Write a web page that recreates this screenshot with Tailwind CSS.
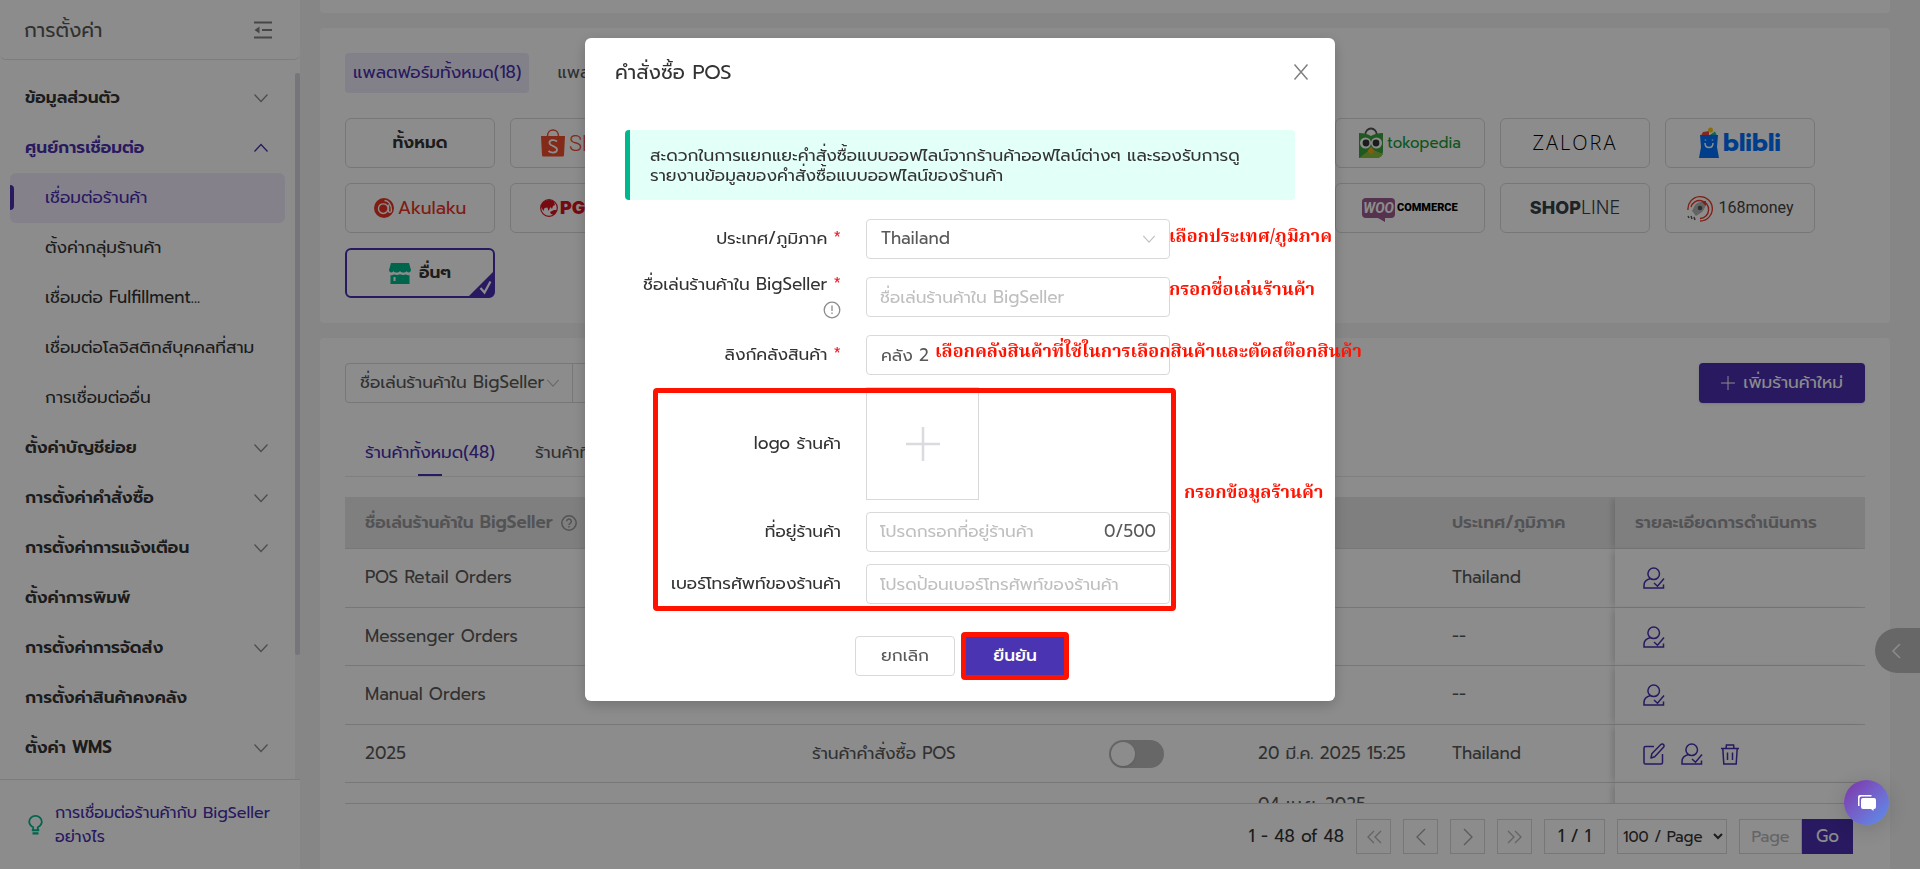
<!DOCTYPE html>
<html lang="th">
<head>
  <meta charset="UTF-8">
  <meta name="viewport" content="width=device-width, initial-scale=1">
  <title>BigSeller - การตั้งค่า</title>
  <script src="https://cdn.jsdelivr.net/npm/@tailwindcss/browser@4"></script>
</head>
<body class="h-screen overflow-hidden bg-[#f5f5f5] font-['Prompt','Noto_Sans',sans-serif] text-[17px] text-[#595959]">

  <!-- Icon sprite -->
  <svg class="hidden">
    <symbol id="down" viewBox="0 0 16 16"><path d="M1.5 4.5 8 11.5l6.500-7" fill="none" stroke="currentColor" stroke-width="1.300"/></symbol>
    <symbol id="up" viewBox="0 0 16 16"><path d="M1.500 11.500 8 4.500l6.500 7" fill="none" stroke="currentColor" stroke-width="1.300"/></symbol>
    <symbol id="user-check" viewBox="0 0 22 22"><path d="M10.700 1a5.800 5.800 0 1 1 0 11.600 5.800 5.800 0 0 1 0-11.600M7.500 11.500C3.500 12.500 1 15 1 18.500V21h19.500v-3.500M11 16l3.500 3.200L21 11.500" fill="none" stroke="currentColor" stroke-width="1.500"/></symbol>
    <symbol id="edit" viewBox="0 0 22 22"><path d="M11 3.500H2.500A1.500 1.500 0 0 0 1 5v14.500A1.500 1.500 0 0 0 2.500 21h15.500a1.500 1.500 0 0 0 1.500-1.500V11M8 15l.800-4.200 9-9.200a1.800 1.800 0 0 1 2.700 0 1.800 1.800 0 0 1 0 2.600L11.700 13.700z" fill="none" stroke="currentColor" stroke-width="1.500" stroke-linejoin="round"/></symbol>
    <symbol id="trash" viewBox="0 0 22 22"><path d="M2 5.500h18M7 5.500l.400-3.500h7.200l.400 3.500M3.800 5.500 4.800 21h12.400l1-15.500M8.500 9.500V17M13.500 9.500V17" fill="none" stroke="currentColor" stroke-width="1.500"/></symbol>
  </svg>

  <div class="flex h-full">

    <!-- Sidebar -->
    <aside class="flex w-[300px] shrink-0 flex-col bg-white">
      <div class="flex h-[60px] items-center justify-between rounded-b-md border-b border-[#e4e4e4] pr-7 pl-6">
        <h1 class="text-xl">การตั้งค่า</h1>
        <button aria-label="ย่อเมนู" class="text-[#808080]">
          <svg class="h-[18px] w-[18px]" viewBox="0 0 18 18" fill="none" stroke="currentColor" stroke-width="1.800"><path d="M0 1.500h18M8 9h10M0 16.500h18"/><path d="M5.500 5.500v7L.500 9z" fill="currentColor" stroke="none"/></svg>
        </button>
      </div>

      <div class="flex min-h-0 flex-1 overflow-hidden pt-[13px]">
        <nav class="flex-1 pl-[10px] text-[#333]">
          <ul id="menu" class="mr-[10px]"></ul>
        </nav>
        <div class="w-[5px] bg-[#f5f5f5]"><div class="h-[582px] w-[5px] rounded bg-[#d5d8de]"></div></div>
      </div>

      <div class="flex h-[90px] items-center gap-3 border-t border-[#e0e0e0] pr-4 pl-7">
        <svg class="h-5 w-[15px] shrink-0 text-[#00b88d]" viewBox="0 0 15 20" fill="none" stroke="currentColor" stroke-width="1.800"><path d="M5.200 15v-2.800C2.800 11 1.200 9.300 1.200 6.800a6.300 5.900 0 0 1 12.600 0c0 2.500-1.600 4.200-4 5.400V15"/><path d="M3.800 14.300h7.400v2H3.800zM4.500 17.300h6v2.200h-6z" fill="currentColor" stroke="none"/></svg>
        <a href="#" class="leading-6 text-base text-[#492fb0]">การเชื่อมต่อร้านค้ากับ BigSeller อย่างไร</a>
      </div>
    </aside>

    <!-- Content -->
    <main class="flex min-w-0 flex-1 flex-col pr-[30px] pl-5">
      <section class="h-[13px] shrink-0 rounded-b bg-white"></section>

      <section class="mt-[15px] h-[295px] shrink-0 rounded bg-white p-[25px]">
        <div class="flex h-10 items-center gap-5">
          <button class="h-10 rounded bg-[#edeaf8] px-2 text-[#492fb0]">แพลตฟอร์มทั้งหมด(18)</button>
          <button class="h-10 px-2 whitespace-nowrap">แพลตฟอร์ม</button>
        </div>

        <div class="mt-[25px] grid auto-rows-[50px] grid-cols-[repeat(9,150px)] gap-[15px] text-[#333]">
          <button class="rounded-md border border-[#d9d9d9] font-semibold">ทั้งหมด</button>
          <button class="flex items-center gap-1 rounded-md border border-[#d9d9d9] pl-[30px] text-[22px] text-[#ee4d2d]">
            <svg class="h-7 w-6" viewBox="0 0 24 28"><path d="M0 7h24l-1 19a1.500 1.500 0 0 1-1.500 1.500h-19A1.500 1.500 0 0 1 1 26z" fill="#ee4d2d"/><path d="M6.500 7c0-8 11-8 11 0" fill="none" stroke="#ee4d2d" stroke-width="1.500"/><path d="M16 12.500c-3-2.500-8-1.500-7.500 1.700C9 17.500 16 17 16 20.500c0 3.500-5.500 4-8.500 1.500" fill="none" stroke="#fff" stroke-width="1.800"/></svg>
            <span class="font-['Roboto',sans-serif] font-light">Shopee</span>
          </button>
          <button class="col-start-7 flex items-center justify-center gap-1 rounded-md border border-[#d9d9d9] text-[#189a32]">
            <svg class="h-8 w-6" viewBox="0 0 24 32"><path d="M6 9c0-10 12-10 12 0" fill="none" stroke="#555" stroke-width="1.800"/><path d="M0 6c5 0 9 1 12 3 3-2 7-3 12-3v18q0 7-7 7H0z" fill="#3ba13c"/><path d="m0 31 12-9 12 5q-2 4-7 4z" fill="#8bbf3c"/><circle cx="6.500" cy="16" r="5.500" fill="#fff"/><circle cx="17.500" cy="16" r="5.500" fill="#fff"/><circle cx="7" cy="16" r="3.400" fill="#333"/><circle cx="17" cy="16" r="3.400" fill="#333"/><path d="M12 19.500 15.500 24 12 27.500 8.500 24z" fill="#f6a51c"/></svg>
            <span class="text-[15px]">tokopedia</span>
          </button>
          <button class="rounded-md border border-[#d9d9d9] font-['Open_Sans',sans-serif] text-xl font-light tracking-widest text-black">ZALORA</button>
          <button class="flex items-center justify-center gap-1 rounded-md border border-[#d9d9d9] text-[#0072ff]">
            <svg class="h-8 w-5" viewBox="0 0 20 32"><path d="M2 8.500 4 5l6-1v4.500z" fill="#f0483e"/><circle cx="11.500" cy="3" r="2.500" fill="#f9c80e"/><path d="m10 8.500 6-4 2 4z" fill="#1fb5a0"/><path d="M1 8h18l-1 12 2 11H0l2-11z" fill="#0072ff"/><path d="M6 16c0 6 8 6 8 0M6.500 12.500v1M13.500 12.500v1" fill="none" stroke="#fff" stroke-width="1.500"/></svg>
            <span class="text-2xl font-bold">blibli</span>
          </button>

          <button class="flex items-center justify-center gap-1 rounded-md border border-[#d9d9d9] text-[#ea3323]">
            <svg class="h-5 w-5" viewBox="0 0 20 20"><circle cx="10" cy="10" r="10" fill="#ea3323"/><path d="M14.500 6.500v6c0 3 3 2 3 0C17.500 6 14 2.500 10.500 2.500M14 10a4.800 4.800 0 1 1-9.500 0 4.800 4.800 0 0 1 9.500 0" fill="none" stroke="#fff" stroke-width="1.400"/></svg>
            <span class="text-lg">Akulaku</span>
          </button>
          <button class="flex items-center gap-[2px] rounded-md border border-[#d9d9d9] pl-[29px] text-[#d8121f]">
            <svg class="h-[18px] w-[18px]" viewBox="0 0 18 18"><circle cx="9" cy="9" r="8.300" fill="#fff" stroke="#d8121f" stroke-width="1.200"/><path d="M1 8c0-4 4-7 8-7 2 0 4 .500 5 2l1 3-2 1-1 3-1.500-2-2 4-1-3.500-3 .500-1 3zM10 13l4-2 3 0-3 5-3-1z" fill="#d8121f"/></svg>
            <span class="font-['Inter',sans-serif] text-lg font-black">PGMALL</span>
          </button>
          <button class="col-start-7 flex items-center justify-center gap-[2px] rounded-md border border-[#d9d9d9] font-['Roboto',sans-serif] text-black">
            <span class="relative rounded bg-[#9b5c8f] px-px text-sm leading-5 font-bold text-white italic">WOO<svg class="absolute top-5 left-4 h-1 w-2" viewBox="0 0 8 4"><path d="M0 0h7v4z" fill="#9b5c8f"/></svg></span>
            <span class="text-[11px] font-black">COMMERCE</span>
          </button>
          <button class="rounded-md border border-[#d9d9d9] font-['Inter',sans-serif] text-lg text-[#36424a]"><b class="font-extrabold">SHOP</b><span class="font-light">LINE</span></button>
          <button class="flex items-center justify-center gap-[6px] rounded-md border border-[#d9d9d9] text-[#444]">
            <svg class="h-[27px] w-[26px]" viewBox="0 0 26 27" fill="none" stroke="#ea3b2a" stroke-width="1.400"><path d="M1 15A12.200 12.200 0 1 1 13 26"/><path d="M4 12a9 9 0 1 1 9 11.500"/><path d="M5 16 8 10c3-3 7-4 11-4 0 4-1 8-4 11l-6 4z" fill="#b4b4b4" stroke="none"/><path d="M14 6h5v5z" fill="#ea3b2a" stroke="none"/><circle cx="13" cy="13" r="2.300" fill="#555" stroke="none"/><path d="m1 21 1 2m2-2 1 3m2-2 1 3" stroke="#555"/></svg>
            <span class="font-['Roboto',sans-serif] text-base">168money</span>
          </button>

          <button class="relative flex items-center justify-center gap-2 rounded-md border-2 border-[#492fb0] font-semibold">
            <svg class="h-[21px] w-[22px]" viewBox="0 0 22 21"><path d="M2 0h18l2 7c0 3-4 3-4.500 1-1 2-5 2-6.500 0-1.500 2-5.500 2-6.500 0C4 10 0 10 0 7zM1.500 12c2 .500 3 0 3.500-.700 1.500 1 4 1 6 0 2 1 4.500 1 6 0 .500.700 1.500 1.200 3.500.700V21h-19z" fill="#00b88d"/><path d="M5.500 14v4" stroke="#fff" stroke-width="2"/></svg>
            อื่นๆ
            <svg class="absolute right-0 bottom-0 h-6 w-6" viewBox="0 0 24 24"><path d="M24 0v24H0z" fill="#492fb0"/><path d="m11.500 16 4 4.500 6-11" fill="none" stroke="#fff" stroke-width="2.200"/></svg>
          </button>
        </div>
      </section>

      <section class="mt-[15px] flex min-h-0 flex-1 flex-col rounded-t bg-white px-[25px] pt-[25px]">
        <div class="flex h-10 justify-between">
          <div class="flex w-[400px] rounded-sm border border-[#d9d9d9]">
            <button class="flex items-center gap-[2px] border-r border-[#d9d9d9] pr-3 pl-[14px] whitespace-nowrap">ชื่อเล่นร้านค้าใน BigSeller <svg class="h-[14px] w-[14px] text-[#bfbfbf]"><use href="#down"/></svg></button>
            <input aria-label="ค้นหา" class="min-w-0 flex-1">
          </div>
          <button class="flex items-center gap-2 rounded-sm bg-[#492fb0] px-[22px] text-white shadow">
            <svg class="h-[14px] w-[14px]" viewBox="0 0 14 14" stroke="currentColor"><path d="M7 0v14M0 7h14"/></svg>
            <span>เพิ่มร้านค้าใหม่</span>
          </button>
        </div>

        <div class="mt-[25px] flex h-[49px] shrink-0 gap-10 border-b border-[#e8e8e8] px-5">
          <button class="flex flex-col items-center text-[#492fb0]"><span class="flex h-[46px] items-center pt-1">ร้านค้าทั้งหมด(48)</span><span class="h-[2px] w-6 bg-[#492fb0]"></span></button>
          <button class="h-[46px] pt-1 whitespace-nowrap">ร้านค้าที่เปิดใช้งาน</button>
        </div>

        <div class="mt-5 min-h-0 flex-1 overflow-hidden">
          <table class="w-full table-fixed border-separate border-spacing-0 text-left">
            <thead>
              <tr class="h-[52px] bg-[#e8e8e8] text-[#98989d]">
                <th class="border-b border-[#d9d9d9] pl-5 font-semibold"><span class="flex items-center gap-2">ชื่อเล่นร้านค้าใน BigSeller
                  <svg class="h-4 w-4" viewBox="0 0 16 16" fill="none" stroke="currentColor" stroke-width="1.500"><circle cx="8" cy="8" r="7.200"/><path d="M5.700 6.300a2.300 2.300 0 1 1 3.500 2C8.300 8.800 8 9.200 8 10M8 11v1.500"/></svg></span></th>
                <th class="w-[243px] border-b border-[#d9d9d9]"></th>
                <th class="w-[203px] border-b border-[#d9d9d9]"></th>
                <th class="w-[194px] border-b border-[#d9d9d9]"></th>
                <th class="w-[183px] border-b border-[#d9d9d9] pl-5 font-semibold">ประเทศ/ภูมิภาค</th>
                <th class="w-[250px] border-b border-[#d9d9d9] pl-5 font-semibold shadow-[-5px_0_6px_-2px_rgba(0,0,0,0.15)]">รายละเอียดการดำเนินการ</th>
              </tr>
            </thead>
            <tbody id="rows"></tbody>
          </table>
        </div>

        <!-- Pagination -->
        <div class="flex h-[66px] shrink-0 items-center justify-end gap-3 border-t border-[#d9d9d9] pr-3 text-[#333]">
          <span>1 - 48 of 48</span>
          <button aria-label="หน้าแรก" class="flex h-[35px] w-[35px] items-center justify-center border border-[#d9d9d9] text-[#b5b5b5]"><svg class="h-4 w-4" viewBox="0 0 16 16" fill="none" stroke="currentColor" stroke-width="1.300"><path d="M8 2 2 8l6 6M15 2 9 8l6 6"/></svg></button>
          <button aria-label="ก่อนหน้า" class="flex h-[35px] w-[35px] items-center justify-center border border-[#d9d9d9] text-[#a5a5a5]"><svg class="h-[18px] w-[10px]" viewBox="0 0 10 18" fill="none" stroke="currentColor" stroke-width="1.300"><path d="M9 1 1 9l8 8"/></svg></button>
          <button aria-label="ถัดไป" class="flex h-[35px] w-[35px] items-center justify-center border border-[#d9d9d9] text-[#a5a5a5]"><svg class="h-[18px] w-[10px]" viewBox="0 0 10 18" fill="none" stroke="currentColor" stroke-width="1.300"><path d="m1 1 8 8-8 8"/></svg></button>
          <button aria-label="หน้าสุดท้าย" class="flex h-[35px] w-[35px] items-center justify-center border border-[#d9d9d9] text-[#b5b5b5]"><svg class="h-4 w-4" viewBox="0 0 16 16" fill="none" stroke="currentColor" stroke-width="1.300"><path d="m1 2 6 6-6 6M8 2l6 6-6 6"/></svg></button>
          <span class="flex h-[35px] w-[61px] items-center justify-center border border-[#d9d9d9]">1 / 1</span>
          <select aria-label="จำนวนต่อหน้า" class="h-[35px] w-[110px] border border-[#d9d9d9] bg-white px-px text-[15px]"><option>100 / Page</option></select>
          <span class="flex">
            <input aria-label="หน้า" placeholder="Page" class="h-[35px] w-[63px] border border-[#d9d9d9] text-center text-base placeholder:text-[#b8b8b8]">
            <button class="h-[35px] w-[51px] bg-[#492fb0] text-white">Go</button>
          </span>
        </div>
      </section>
    </main>
  </div>

  <button aria-label="เปิดแผง" class="fixed top-[628px] right-0 flex h-[45px] w-[45px] items-center rounded-l-full bg-[#bcbcbc] pl-4 text-white"><svg class="h-4 w-[10px]" viewBox="0 0 10 16" fill="none" stroke="currentColor" stroke-width="1.500"><path d="M9 1 2 8l7 7"/></svg></button>

  <!-- Modal -->
  <div class="fixed inset-0 flex items-start justify-center bg-black/45 pt-[38px]">
    <div role="dialog" aria-labelledby="modalTitle" class="relative w-[750px] rounded-md bg-white pb-[25px] text-[#333] shadow-[0_4px_14px_rgba(0,0,0,0.2)]">
      <div class="flex h-[67px] items-center justify-between px-[30px]">
        <h2 id="modalTitle" class="text-xl">คำสั่งซื้อ POS</h2>
        <button aria-label="ปิด" class="-mr-1 text-[#808080]"><svg class="h-4 w-4" viewBox="0 0 16 16" fill="none" stroke="currentColor" stroke-width="1.500"><path d="M1.500.500l13 15M14.500.500l-13 15"/></svg></button>
      </div>

      <p class="mx-10 mt-[25px] rounded border-l-[5px] border-[#00b88d] bg-[#e2fff8] px-5 py-[15px] leading-5">สะดวกในการแยกแยะคำสั่งซื้อแบบออฟไลน์จากร้านค้าออฟไลน์ต่างๆ และรองรับการดูรายงานข้อมูลของคำสั่งซื้อแบบออฟไลน์ของร้านค้า</p>

      <form class="mt-[19px]">
        <div class="mb-[18px] flex h-10 items-center gap-[25px]">
          <label for="country" class="w-[256px] text-right">ประเทศ/ภูมิภาค <span class="text-[#f5222d]">*</span></label>
          <div class="relative h-10 w-[304px]">
            <select id="country" class="h-10 w-full appearance-none rounded-sm border border-[#d9d9d9] px-[14px] text-[#595959]"><option>Thailand</option></select>
            <svg class="pointer-events-none absolute top-[13px] right-[14px] h-[14px] w-[14px] text-[#bfbfbf]"><use href="#down"/></svg>
          </div>
        </div>
        <div class="mb-[18px] flex h-10 items-center gap-[25px]">
          <label for="nickname" class="w-[256px] text-right leading-[26px]">ชื่อเล่นร้านค้าใน BigSeller <span class="text-[#f5222d]">*</span>
            <svg class="ml-auto block h-[26px] w-[18px] text-[#8c8c8c]" viewBox="0 0 18 26" fill="none" stroke="currentColor" stroke-width="1.300"><circle cx="9" cy="13" r="7.800"/><path d="M9 8.500v5.500M9 15.500v1.500"/></svg></label>
          <input id="nickname" placeholder="ชื่อเล่นร้านค้าใน BigSeller" class="h-10 w-[304px] rounded-sm border border-[#d9d9d9] px-[13px] placeholder:text-[#bfbfbf]">
        </div>
        <div class="mb-3 flex h-10 items-center gap-[25px]">
          <label for="warehouse" class="w-[256px] text-right">ลิงก์คลังสินค้า <span class="text-[#f5222d]">*</span></label>
          <input id="warehouse" value="คลัง 2" class="h-10 w-[304px] rounded-sm border border-[#d9d9d9] px-[14px] text-[#595959]">
        </div>
        <div class="mb-3 flex h-[113px] items-center gap-[25px]">
          <span class="w-[256px] text-right">logo ร้านค้า</span>
          <button type="button" aria-label="อัปโหลด logo" class="flex h-[113px] w-[113px] items-center justify-center border border-[#d9d9d9] text-[#d9dbe0]"><svg class="h-9 w-9" viewBox="0 0 36 36" stroke="currentColor" stroke-width="2.500"><path d="M18 1v34M1 18h34"/></svg></button>
        </div>
        <div class="mb-3 flex h-10 items-center gap-[25px]">
          <label for="address" class="w-[256px] text-right">ที่อยู่ร้านค้า</label>
          <div class="flex h-10 w-[304px] items-center rounded-sm border border-[#d9d9d9] px-[13px]">
            <input id="address" placeholder="โปรดกรอกที่อยู่ร้านค้า" class="min-w-0 flex-1 placeholder:text-[#bfbfbf]">
            <span class="text-[#595959]">0/500</span>
          </div>
        </div>
        <div class="flex h-10 items-center gap-[25px]">
          <label for="phone" class="w-[256px] text-right whitespace-nowrap">เบอร์โทรศัพท์ของร้านค้า</label>
          <input id="phone" placeholder="โปรดป้อนเบอร์โทรศัพท์ของร้านค้า" class="h-10 w-[304px] rounded-sm border border-[#d9d9d9] px-[13px] placeholder:text-[#bfbfbf]">
        </div>
        <div class="mt-8 flex justify-center gap-[10px]">
          <button type="button" class="h-10 w-[100px] rounded-sm border border-[#d9d9d9] text-[#595959]">ยกเลิก</button>
          <button type="button" class="relative h-10 w-[100px] bg-[#4a34b2] font-medium text-white">ยืนยัน<span class="absolute -inset-1 rounded-sm border-[5px] border-[#ff1200]"></span></button>
        </div>
      </form>

      <!-- Red notes -->
      <div class="pointer-events-none font-['Angsana_New','Noto_Serif_Thai','Trirong','Taviraj',serif] text-lg leading-6 font-bold whitespace-nowrap text-[#ff1200]">
        <div class="absolute top-[350px] left-[68px] h-[223px] w-[523px] rounded-sm border-[5px] border-[#ff1200]"></div>
        <span class="absolute top-[188px] left-[584px]">เลือกประเทศ/ภูมิภาค</span>
        <span class="absolute top-[241px] left-[584px]">กรอกชื่อเล่นร้านค้า</span>
        <span class="absolute top-[303px] left-[350px]">เลือกคลังสินค้าที่ใช้ในการเลือกสินค้าและตัดสต๊อกสินค้า</span>
        <span class="absolute top-[444px] left-[599px]">กรอกข้อมูลร้านค้า</span>
      </div>
    </div>
  </div>

  <button aria-label="แชท" class="fixed right-[31px] bottom-11 flex h-[45px] w-[45px] items-center justify-center rounded-full bg-gradient-to-br from-[#7b2fa8] to-[#5490ee] shadow-[0_4px_20px_rgba(0,0,0,0.15)]">
    <svg class="h-4 w-[18px]" viewBox="0 0 18 16" fill="#fff"><path d="M0 2a2 2 0 0 1 2-2h11.500v1.600H3.500a2 2 0 0 0-2 2V11H0z"/><path d="M5 3h11a2 2 0 0 1 2 2v7a2 2 0 0 1-2 2h-.500v2l-2.500-2H5a2 2 0 0 1-2-2V5a2 2 0 0 1 2-2z"/></svg>
  </button>

  <script>
    const menu = [
      { text: "ข้อมูลส่วนตัว", arrow: "down" },
      { text: "ศูนย์การเชื่อมต่อ", arrow: "up", open: true },
      { text: "เชื่อมต่อร้านค้า", sub: true, active: true },
      { text: "ตั้งค่ากลุ่มร้านค้า", sub: true },
      { text: "เชื่อมต่อ Fulfillment...", sub: true },
      { text: "เชื่อมต่อโลจิสติกส์บุคคลที่สาม", sub: true },
      { text: "การเชื่อมต่ออื่น", sub: true },
      { text: "ตั้งค่าบัญชีย่อย", arrow: "down" },
      { text: "การตั้งค่าคำสั่งซื้อ", arrow: "down" },
      { text: "การตั้งค่าการแจ้งเตือน", arrow: "down" },
      { text: "ตั้งค่าการพิมพ์" },
      { text: "การตั้งค่าการจัดส่ง", arrow: "down" },
      { text: "การตั้งค่าสินค้าคงคลัง" },
      { text: "ตั้งค่า WMS", arrow: "down" }
    ];

    document.getElementById("menu").innerHTML = menu.map(m => {
      if (m.sub) {
        const cls = m.active ? "bg-[#f0ebfd] text-[#492fb0]" : "";
        const bar = m.active ? '<span class="absolute top-3 left-0 h-[25px] w-1 rounded-r-sm bg-[#492fb0]"></span>' : "";
        return `<li><a href="#" class="relative flex h-[50px] items-center rounded-md pl-[35px] whitespace-nowrap ${cls}">${bar}${m.text}</a></li>`;
      }
      const color = m.open ? "text-[#492fb0]" : "";
      const arrowColor = m.open ? "text-[#492fb0]" : "text-[#8c8c8c]";
      const arrow = m.arrow ? `<svg class="h-4 w-4 ${arrowColor}"><use href="#${m.arrow}"/></svg>` : "";
      return `<li><a href="#" class="flex h-[50px] items-center justify-between pr-4 pl-[15px] font-semibold ${color}">${m.text}${arrow}</a></li>`;
    }).join("");

    const rows = [
      { name: "POS Retail Orders", country: "Thailand" },
      { name: "Messenger Orders", country: "--" },
      { name: "Manual Orders", country: "--" },
      { name: "2025", type: "ร้านค้าคำสั่งซื้อ POS", date: "20 มี.ค. 2025 15:25", country: "Thailand", custom: true },
      { name: "", date: "04 เม.ย. 2025", country: "", last: true }
    ];

    const icon = (id, label) => `<button aria-label="${label}" class="block"><svg class="h-[22px] w-[22px]"><use href="#${id}"/></svg></button>`;

    document.getElementById("rows").innerHTML = rows.map((r, i) => {
      const height = i % 2 ? "h-[58px]" : "h-[59px]";
      const td = r.last ? "h-[60px] pt-[9px] align-top" : `${height} border-b border-[#d9d9d9]`;
      const toggle = r.custom ? '<button role="switch" aria-checked="false" aria-label="สถานะ" class="mx-auto flex h-7 w-[55px] items-center rounded-full bg-[#bcbcbc] p-[2px]"><span class="h-6 w-6 rounded-full bg-white shadow"></span></button>' : "";
      const actions = r.last ? "" : r.custom
        ? icon("edit", "แก้ไข") + icon("user-check", "สิทธิ์") + icon("trash", "ลบ")
        : icon("user-check", "สิทธิ์");
      return `<tr>
        <td class="${td} pl-5">${r.name}</td>
        <td class="${td} pl-5">${r.type || ""}</td>
        <td class="${td}">${toggle}</td>
        <td class="${td} pl-5 whitespace-nowrap">${r.date || ""}</td>
        <td class="${td} pl-5">${r.country}</td>
        <td class="${td} bg-white pl-7 text-[#492fb0] shadow-[-5px_0_6px_-2px_rgba(0,0,0,0.15)]"><div class="flex gap-4">${actions}</div></td>
      </tr>`;
    }).join("");
  </script>
</body>
</html>
